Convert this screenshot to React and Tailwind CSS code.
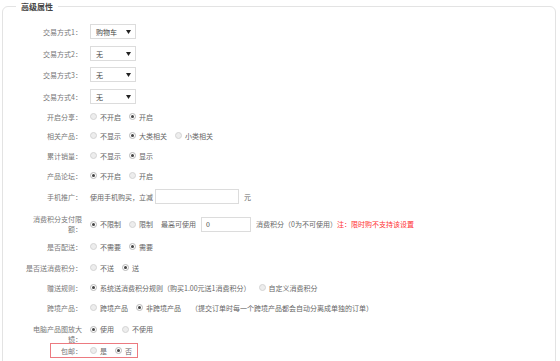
import React from 'react';

const font = { fontFamily: '"Noto Sans CJK SC", "Noto Sans", sans-serif' };

function Radio({ checked }) {
  if (checked) {
    return (
      <span className="w-[7px] h-[7px] shrink-0 rounded-full border border-[#b8b8b8] bg-white flex items-center justify-center">
        <span className="w-[3px] h-[3px] rounded-full bg-[#444]" />
      </span>
    );
  }
  return <span className="w-[7px] h-[7px] shrink-0 rounded-full border border-[#d4d4d4] bg-[#ededed]" />;
}

function Option({ checked, children }) {
  return (
    <span className="flex items-center gap-[3px] mr-[8px] whitespace-nowrap">
      <Radio checked={checked} />
      <span>{children}</span>
    </span>
  );
}

function Select({ value }) {
  return (
    <div className="w-[46px] h-[15px] border border-[#dcdcdc] bg-white flex items-center justify-between pl-[5px] pr-[4px] text-[#444]">
      <span>{value}</span>
      <svg width="5" height="4" viewBox="0 0 5 4">
        <path d="M0 0H5L2.5 4Z" fill="#222" />
      </svg>
    </div>
  );
}

function Row({ label, mt, children }) {
  return (
    <div className={`flex items-center h-[15px] ${mt}`}>
      <div className="ml-[19px] w-[60px] shrink-0 text-right text-[#777]">{label}</div>
      <div className="ml-[8px] flex items-center text-[#666]">{children}</div>
    </div>
  );
}

export default function App() {
  return (
    <div className="w-[560px] h-[361px] overflow-hidden bg-white text-[7px] leading-[10px]" style={font}>
      <fieldset className="ml-[2px] w-[554px] h-[420px] border border-[#e3e3e3] rounded-[6px] p-0">
        <legend className="ml-[13px] px-[5px] text-[8px] leading-[13px] font-bold text-[#444]">高级属性</legend>

        <Row label="交易方式1：" mt="mt-[11px]"><Select value="购物车" /></Row>
        <Row label="交易方式2：" mt="mt-[7px]"><Select value="无" /></Row>
        <Row label="交易方式3：" mt="mt-[6px]"><Select value="无" /></Row>
        <Row label="交易方式4：" mt="mt-[7px]"><Select value="无" /></Row>

        <Row label="开启分享：" mt="mt-[5px]">
          <Option>不开启</Option>
          <Option checked>开启</Option>
        </Row>
        <Row label="相关产品：" mt="mt-[4px]">
          <Option>不显示</Option>
          <Option checked>大类相关</Option>
          <Option>小类相关</Option>
        </Row>
        <Row label="累计销量：" mt="mt-[5px]">
          <Option>不显示</Option>
          <Option checked>显示</Option>
        </Row>
        <Row label="产品论坛：" mt="mt-[5px]">
          <Option checked>不开启</Option>
          <Option>开启</Option>
        </Row>
        <Row label="手机推广：" mt="mt-[6px]">
          <span>使用手机购买，立减</span>
          <span className="ml-[2px] w-[84px] h-[15px] border border-[#dcdcdc] bg-white" />
          <span className="ml-[5px]">元</span>
        </Row>

        <div className="flex items-center h-[20px] mt-[10px]">
          <div className="ml-[19px] w-[60px] shrink-0 text-right text-[#777]">
            消费积分支付限<br />额：
          </div>
          <div className="ml-[8px] flex items-center text-[#666] whitespace-nowrap">
            <Option checked>不限制</Option>
            <Option>限制</Option>
            <span>最高可使用</span>
            <span className="ml-[5px] w-[50px] h-[15px] border border-[#dcdcdc] bg-white flex items-center pl-[4px] text-[#444]">0</span>
            <span className="ml-[5px]">消费积分（0为不可使用）</span>
            <span className="text-[#f33]">注：限时购不支持该设置</span>
          </div>
        </div>

        <Row label="是否配送：" mt="mt-[5px]">
          <Option>不需要</Option>
          <Option checked>需要</Option>
        </Row>
        <Row label="是否送消费积分：" mt="mt-[6px]">
          <Option>不送</Option>
          <Option checked>送</Option>
        </Row>
        <Row label="赠送规则：" mt="mt-[5px]">
          <Option checked>系统送消费积分规则（购买1.00元送1消费积分）</Option>
          <Option>自定义消费积分</Option>
        </Row>
        <Row label="跨境产品：" mt="mt-[5px]">
          <Option>跨境产品</Option>
          <Option checked>非跨境产品</Option>
          <span className="ml-[2px] whitespace-nowrap">（提交订单时每一个跨境产品都会自动分离成单独的订单）</span>
        </Row>

        <div className="flex items-start h-[19px] mt-[9px]">
          <div className="ml-[19px] w-[60px] shrink-0 text-right text-[#777]">
            电脑产品图放大<br />镜：
          </div>
          <div className="ml-[8px] h-[10px] flex items-center text-[#666]">
            <Option checked>使用</Option>
            <Option>不使用</Option>
          </div>
        </div>

        <div className="ml-[47px] w-[88px] h-[15px] border border-[#ec7a80] flex items-center">
          <div className="w-[31px] shrink-0 text-right text-[#777]">包邮：</div>
          <div className="ml-[8px] flex items-center text-[#666]">
            <Option>是</Option>
            <Option checked>否</Option>
          </div>
        </div>
      </fieldset>
    </div>
  );
}
